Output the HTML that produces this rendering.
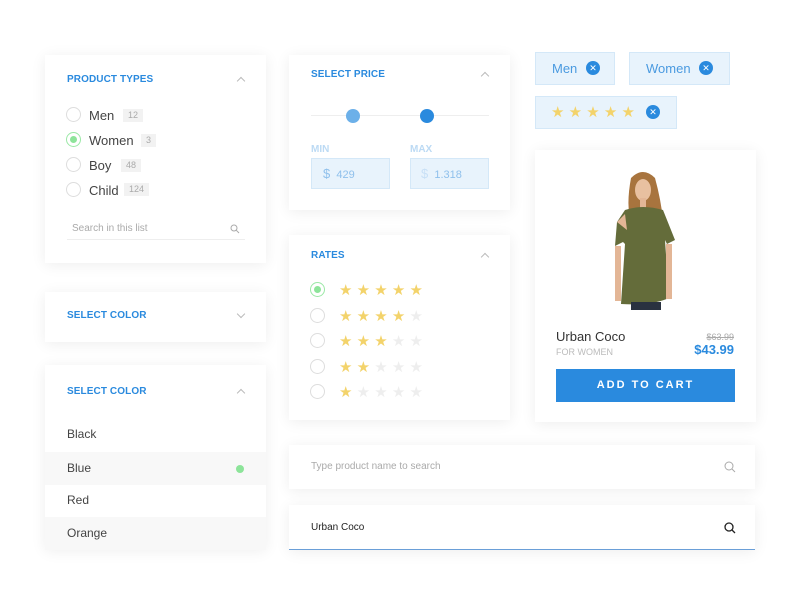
<!DOCTYPE html>
<html><head><style>
*{box-sizing:border-box;margin:0;padding:0}
body{width:800px;height:600px;background:#fff;font-family:"Liberation Sans",sans-serif;position:relative;overflow:hidden;color:#333}
.card{position:absolute;background:#fff;box-shadow:0 2px 14px rgba(0,0,0,.07)}
.t{position:absolute;font-size:10px;font-weight:bold;color:#2a8ade;letter-spacing:.1px}
.chev{position:absolute;width:6px;height:6px;border-left:1px solid #bbb;border-top:1px solid #bbb;transform:rotate(45deg)}
.chev.d{transform:rotate(225deg)}
.ab{position:absolute}
.rad{position:absolute;width:15px;height:15px;border:1px solid #ddd;border-radius:50%;background:#fff}
.rad.on{border-color:#9be8a6}
.rad.on:after{content:"";position:absolute;left:3px;top:3px;width:7px;height:7px;border-radius:50%;background:#8de49a}
.lbl{position:absolute;font-size:13px;color:#444}
.cnt{position:absolute;font-size:9px;color:#aaa;background:#f2f2f2;height:13px;line-height:13px;padding:0 5px}
.st{position:absolute;font-size:15px;line-height:15px;color:#f3d36b}
.st i{font-style:normal;color:#eee}
.tag{position:absolute;background:#e8f3fc;border:1px solid #d4e8f8;color:#4a9ae0;font-size:13px}
.x{position:absolute;width:14px;height:14px;border-radius:50%;background:#2a8ade;color:#fff;font-size:9px;line-height:14px;text-align:center}
.row{position:absolute;left:0;width:221px;height:33px;font-size:12px;color:#444;padding-left:22px;line-height:33px}
</style></head><body>

<div class="card" style="left:45px;top:55px;width:221px;height:208px">
<div class="t" style="left:22px;top:19px">PRODUCT TYPES</div>
<div class="chev" style="left:193px;top:23px"></div>
<div class="rad" style="left:21px;top:52px"></div><div class="lbl" style="left:44px;top:53px">Men</div><div class="cnt" style="left:78px;top:54px">12</div>
<div class="rad on" style="left:21px;top:77px"></div><div class="lbl" style="left:44px;top:78px">Women</div><div class="cnt" style="left:96px;top:79px">3</div>
<div class="rad" style="left:21px;top:102px"></div><div class="lbl" style="left:44px;top:103px">Boy</div><div class="cnt" style="left:76px;top:104px">48</div>
<div class="rad" style="left:21px;top:127px"></div><div class="lbl" style="left:44px;top:128px">Child</div><div class="cnt" style="left:79px;top:128px">124</div>
<div class="ab" style="left:27px;top:168px;font-size:10px;color:#aaa">Search in this list</div>
<svg class="ab" style="left:185px;top:169px" width="10" height="10"><circle cx="4" cy="4" r="3" fill="none" stroke="#aaa" stroke-width="1"/><line x1="6.2" y1="6.2" x2="9" y2="9" stroke="#aaa"/></svg>
<div class="ab" style="left:22px;top:184px;width:178px;height:1px;background:#eee"></div>
</div>

<div class="card" style="left:45px;top:292px;width:221px;height:50px">
<div class="t" style="left:22px;top:18px">SELECT COLOR</div>
<div class="chev d" style="left:193px;top:19px"></div>
</div>

<div class="card" style="left:45px;top:365px;width:221px;height:184px">
<div class="t" style="left:22px;top:21px">SELECT COLOR</div>
<div class="chev" style="left:193px;top:25px"></div>
<div class="row" style="top:53px">Black</div>
<div class="row" style="top:87px;background:#f8f8f8">Blue<span class="ab" style="left:191px;top:13px;width:8px;height:8px;border-radius:50%;background:#8de49a"></span></div>
<div class="row" style="top:119px">Red</div>
<div class="row" style="top:152px;background:#f8f8f8">Orange</div>
</div>

<div class="card" style="left:289px;top:55px;width:221px;height:155px">
<div class="t" style="left:22px;top:14px">SELECT PRICE</div>
<div class="chev" style="left:193px;top:18px"></div>
<div class="ab" style="left:22px;top:60px;width:178px;height:1px;background:#eee"></div>
<div class="ab" style="left:57px;top:54px;width:14px;height:14px;border-radius:50%;background:#6cb0e9"></div>
<div class="ab" style="left:131px;top:54px;width:14px;height:14px;border-radius:50%;background:#2a8ade"></div>
<div class="ab" style="left:22px;top:89px;font-size:10px;font-weight:bold;color:#bcdaf4">MIN</div>
<div class="ab" style="left:121px;top:89px;font-size:10px;font-weight:bold;color:#bcdaf4">MAX</div>
<div class="ab" style="left:22px;top:103px;width:79px;height:31px;background:#e8f3fc;border:1px solid #d4e8f8;font-size:11px;color:#8fc0ec;line-height:29px;padding-left:11px"><span style="font-size:13px">$</span>&nbsp; 429</div>
<div class="ab" style="left:121px;top:103px;width:79px;height:31px;background:#e8f3fc;border:1px solid #d4e8f8;font-size:11px;color:#8fc0ec;line-height:29px;padding-left:10px"><span style="font-size:13px;color:#c8e0f6">$</span>&nbsp; 1.318</div>
</div>

<div class="card" style="left:289px;top:235px;width:221px;height:185px">
<div class="t" style="left:22px;top:15px">RATES</div>
<div class="chev" style="left:193px;top:19px"></div>
<div class="rad on" style="left:21px;top:47px"></div><div class="st" style="left:50px;top:48px">★ ★ ★ ★ ★</div>
<div class="rad" style="left:21px;top:73px"></div><div class="st" style="left:50px;top:74px">★ ★ ★ ★ <i>★</i></div>
<div class="rad" style="left:21px;top:98px"></div><div class="st" style="left:50px;top:99px">★ ★ ★ <i>★ ★</i></div>
<div class="rad" style="left:21px;top:124px"></div><div class="st" style="left:50px;top:125px">★ ★ <i>★ ★ ★</i></div>
<div class="rad" style="left:21px;top:149px"></div><div class="st" style="left:50px;top:150px">★ <i>★ ★ ★ ★</i></div>
</div>

<div class="tag" style="left:535px;top:52px;width:80px;height:33px"><span class="ab" style="left:16px;top:8px">Men</span><span class="x" style="left:50px;top:8px">✕</span></div>
<div class="tag" style="left:629px;top:52px;width:101px;height:33px"><span class="ab" style="left:16px;top:8px">Women</span><span class="x" style="left:69px;top:8px">✕</span></div>
<div class="tag" style="left:535px;top:96px;width:142px;height:33px"><span class="st" style="left:15px;top:8px">★ ★ ★ ★ ★</span><span class="x" style="left:110px;top:8px">✕</span></div>

<div class="card" style="left:535px;top:150px;width:221px;height:272px">
<svg class="ab" style="left:76px;top:20px" width="70" height="140" viewBox="0 0 70 140">
<path d="M20 8 Q32 -4 44 8 Q50 30 52 50 L46 60 L22 58 Q14 40 20 8Z" fill="#a8743e"/>
<ellipse cx="32" cy="20" rx="8" ry="11" fill="#e8c0a0"/>
<rect x="29" y="28" width="6" height="10" fill="#e3b696"/>
<path d="M14 40 Q32 34 52 40 L64 70 L56 74 L54 70 L58 128 Q40 136 10 134 L14 74 L12 72 L4 76 L6 52 Z" fill="#646c3a"/>
<path d="M6 52 L14 44 L16 60 Z" fill="#e3b696"/>
<rect x="4" y="76" width="6" height="55" fill="#e3b696"/>
<rect x="55" y="74" width="6" height="55" fill="#e3b696"/>
<rect x="20" y="132" width="30" height="8" fill="#2a3240"/>
</svg>
<div class="ab" style="left:21px;top:179px;font-size:13px;color:#333">Urban Coco</div>
<div class="ab" style="left:21px;top:197px;font-size:9px;color:#bbb">FOR WOMEN</div>
<div class="ab" style="right:22px;top:182px;font-size:9px;color:#aaa;text-decoration:line-through">$63.99</div>
<div class="ab" style="right:22px;top:192px;font-size:13px;font-weight:bold;color:#2a8ade">$43.99</div>
<div class="ab" style="left:21px;top:219px;width:179px;height:33px;background:#2a8ade;color:#fff;font-size:11px;font-weight:bold;letter-spacing:2px;text-align:center;line-height:33px">ADD TO CART</div>
</div>

<div class="card" style="left:289px;top:445px;width:466px;height:44px">
<div class="ab" style="left:22px;top:16px;font-size:10px;color:#aaa">Type product name to search</div>
<svg class="ab" style="left:435px;top:16px" width="12" height="12"><circle cx="5" cy="5" r="4" fill="none" stroke="#aaa" stroke-width="1"/><line x1="8" y1="8" x2="11" y2="11" stroke="#aaa"/></svg>
</div>
<div class="card" style="left:289px;top:505px;width:466px;height:45px;border-bottom:1px solid #6a9fd8">
<div class="ab" style="left:22px;top:17px;font-size:10px;color:#222">Urban Coco</div>
<svg class="ab" style="left:435px;top:17px" width="12" height="12"><circle cx="5" cy="5" r="4" fill="none" stroke="#222" stroke-width="1.3"/><line x1="8" y1="8" x2="11" y2="11" stroke="#222" stroke-width="1.3"/></svg>
</div>
</body></html>
